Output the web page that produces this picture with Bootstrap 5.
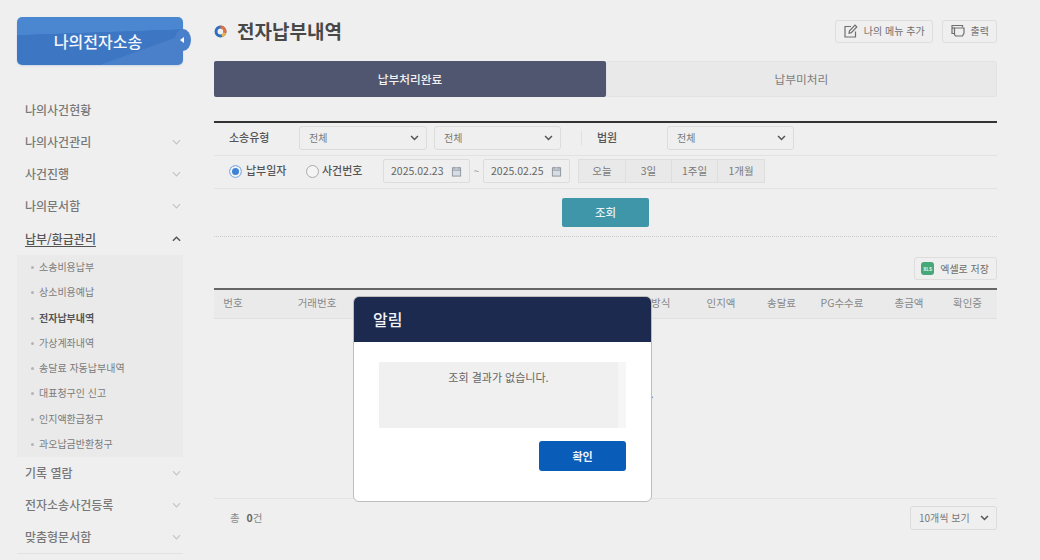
<!DOCTYPE html>
<html lang="ko">
<head>
<meta charset="utf-8">
<title>전자납부내역</title>
<link href="https://cdn.jsdelivr.net/npm/bootstrap@5.3.0/dist/css/bootstrap.min.css" rel="stylesheet">
<style>
html,body{height:560px;overflow:hidden}
body{background:#efefef;font-family:"Noto Sans CJK KR","Noto Sans",sans-serif;font-size:11px;color:#666;position:relative;line-height:1.4}
.shell{width:1040px;height:560px}
.side{width:166px;margin-left:17px;flex:none}
.brand{height:48px;margin-top:17px;border-radius:5px;color:#f4f7fc;font-size:16px;font-weight:500;position:relative;margin-bottom:29px;padding-right:4px;
 background:linear-gradient(160deg,transparent 0 72%,#4a7fc9 72.5%),linear-gradient(178deg,#4a87d0 0 33%,#3d77c4 34%);box-shadow:0 1px 2px rgba(60,110,190,.2)}
.brand-tab{position:absolute;right:-8px;top:12px;width:16px;height:22px;border-radius:50%;background:#4a7fc9;display:flex;align-items:center;justify-content:center}
.brand-tab svg{width:4px;height:6px;margin-left:-3px}
.menu-item{display:flex;align-items:center;justify-content:space-between;height:32px;padding:0 2px 0 8px;background:transparent;border:0;border-top:1px solid #e2e2e2;border-radius:0!important;font-size:12px;color:#787878;font-weight:500;margin:0!important}
.menu-item svg{width:9px;height:6px}
.menu-open{color:#555;height:33px;padding-top:1px}
.menu-open span{text-decoration:underline;text-underline-offset:2px}
.sub-list{background:#eaeaea;padding:0;height:202px;display:flex;flex-direction:column;justify-content:space-around;list-style:none;margin:0;font-size:10px;color:#7b7b7b}
.sub-list li{padding-left:22px;height:25px;line-height:24px;position:relative;margin-top:0}
.sub-list li::before{content:"";position:absolute;left:14px;top:11px;width:3px;height:3px;border-radius:50%;background:#b5b5b5}
.sub-list .on{font-weight:700;color:#555}
.side-end{border-top:1px solid #e2e2e2}
.body-col{width:783px;margin-left:31px;flex:none}
.head-row{height:28px;margin-top:17px;margin-bottom:16px}
.page-title{font-size:19px;font-weight:700;color:#484848;margin:0;line-height:28px}
.ring{width:13px;height:13px;margin-right:10px}
.tool-btn{height:23px;padding:0 7px 0 8px;font-size:10px;color:#6e6e6e;background:#efefef;border:1px solid #ddd;border-radius:3px;display:inline-flex;align-items:center;gap:6px;line-height:1}
.tool-btn svg{width:14px;height:14px}
.tool-gap{gap:9px}
.xl-btn{padding-left:6px}
.tab-row{height:36px;margin-bottom:24px}
.tab-cell{flex:1 1 0;display:flex;align-items:center;justify-content:center;font-size:11.7px;font-weight:500;border-radius:2px}
.tab-on{flex:0 0 392px;background:#50566f;color:#f1f1f1}
.tab-off{background:#e9e9e9;border:1px solid #e3e3e3;color:#7d7d7d;font-weight:400}
.filter{border-top:2px solid #333}
.filter-row{height:33px;border-bottom:1px solid #e2e2e2;padding:0 0 2px 15px;font-size:11px}
.lab{font-weight:500;color:#555}
.w-lab{width:70px}
.w-court{width:70px}
.w-r1{width:60px}
.w-r2{width:61px}
.sel{height:24px;width:128px;padding:0 20px 0 9px;font-size:10px;color:#777;background-color:#efefef;border:1px solid #dcdcdc;border-radius:3px;box-shadow:none;flex:none;line-height:22px;
 background-image:url("data:image/svg+xml,%3csvg xmlns='http://www.w3.org/2000/svg' viewBox='0 0 10 7'%3e%3cpath fill='none' stroke='%23555' stroke-width='1.8' d='M1 1.2l4 4 4-4'/%3e%3c/svg%3e");background-size:9px 6px;background-position:right 7px center}
.sel-b{width:127px;margin-left:7px}
.sel-c{width:127px}
.vr-mini{width:1px;height:14px;background:#e0e0e0;margin:0 15px 0 20px}
.radio-on,.radio-off{width:13px;height:13px;border-radius:50%;flex:none;margin-right:4px;background:#f4f4f4;border:1px solid #aaa}
.radio-on{background:#3f83d6;border:1px solid #8fb8e8;box-shadow:inset 0 0 0 2px #f4f4f4}
.radio-off{margin-right:3px}
.date-box{width:87px;height:24px;border:1px solid #dcdcdc;border-radius:2px;padding:0 7px 0 7px;font-size:10.5px;color:#666;display:flex;align-items:center;justify-content:space-between}
.date-box svg{width:11px;height:11px}
.til{width:13px;text-align:center;color:#999;font-size:10px}
.range-group{margin-left:8px}
.range-group .btn{height:24px;padding:0;font-size:10.5px;color:#7a7a7a;background:#e9e9e9;border:1px solid #dedede;line-height:22px;border-radius:0}
.range-group .btn:first-child{width:48px}.range-group .btn:nth-child(2){width:47px}.range-group .btn:nth-child(3){width:47px}.range-group .btn:nth-child(4){width:48px}
.search-wrap{height:48px;border-bottom:1px dotted #ccc;padding-top:9px}
.go-btn{width:87px;height:29px;padding:0;background:#3f96a8;border:0;color:#e8f1f3;font-size:11.5px;font-weight:500;border-radius:2px;line-height:29px}
.excel-row{height:51px;padding-top:20px}
.xl{width:13px;height:13px;border-radius:3px;background:#45a878;color:#e4f4ec;font-size:5px;font-weight:700;display:flex;align-items:center;justify-content:center;line-height:1}
.grid-wrap{border-top:2px solid #666}
.grid{margin:0;table-layout:fixed;width:783px;--bs-table-bg:transparent;font-size:10.5px;color:#888}
.grid th{height:28px;padding:0;background:#eaeaea;font-weight:400;color:#888;text-align:center;vertical-align:middle;border-bottom:1px solid #e0e0e0}
.grid th:nth-child(9){padding-left:7px}
.grid td{height:180px;padding:67px 4px 0 0;text-align:center;vertical-align:top;border-bottom:1px solid #e4e4e4;color:#666;font-size:11px}
.foot-row{height:33px;padding:7px 0 0 16px;color:#888;font-size:10.5px}
.foot-row b{color:#666;margin-left:4px}
.foot-count{margin-top:5px}
.pager{width:87px;padding-left:8px}
.c1{width:38px}.c2{width:130px}.c3{width:115px}.c4{width:115px}.c5{width:78px}.c6{width:62px}.c7{width:59px}.c8{width:62px}.c9{width:65px}.c10{width:59px}
.alert-box{position:absolute;left:353px;top:296px;width:299px;height:206px;background:#fff;border:1px solid #bdbdbd;border-radius:6px;overflow:hidden}
.alert-head{height:45px;background:#1c2a4f;color:#f4f4f4;font-size:16px;font-weight:500;padding-left:19px;line-height:45px}
.alert-body{padding:20px 25px 0}
.msg-box{height:66px;background:#f0f0f0;display:flex;font-size:11px;color:#666}
.msg-text{flex:1;text-align:center;padding-top:7px;line-height:16px}
.msg-track{width:8px;background:#f6f6f6}
.ok-btn{width:87px;height:30px;margin-top:13px;padding:0;background:#0a5cb9;border:0;color:#eef4fb;font-size:11px;font-weight:700;border-radius:3px;line-height:30px}
</style>
</head>
<body>
<div class="shell d-flex">
  <aside class="side">
    <div class="brand d-flex align-items-center justify-content-center">나의전자소송
      <span class="brand-tab"><svg viewBox="0 0 4 6"><path d="M4 0 0 3l4 3z" fill="#fff"/></svg></span>
    </div>
    <div class="list-group list-group-flush">
      <a class="list-group-item menu-item"><span>나의사건현황</span></a>
      <a class="list-group-item menu-item"><span>나의사건관리</span><svg viewBox="0 0 10 6"><path d="M1 1l4 4 4-4" fill="none" stroke="#c4c4c4" stroke-width="1.3"/></svg></a>
      <a class="list-group-item menu-item"><span>사건진행</span><svg viewBox="0 0 10 6"><path d="M1 1l4 4 4-4" fill="none" stroke="#c4c4c4" stroke-width="1.3"/></svg></a>
      <a class="list-group-item menu-item"><span>나의문서함</span><svg viewBox="0 0 10 6"><path d="M1 1l4 4 4-4" fill="none" stroke="#c4c4c4" stroke-width="1.3"/></svg></a>
      <a class="list-group-item menu-item menu-open"><span>납부/환급관리</span><svg viewBox="0 0 10 6"><path d="M1 5l4-4 4 4" fill="none" stroke="#555" stroke-width="1.6"/></svg></a>
      <ul class="sub-list">
        <li>소송비용납부</li>
        <li>상소비용예납</li>
        <li class="on">전자납부내역</li>
        <li>가상계좌내역</li>
        <li>송달료 자동납부내역</li>
        <li>대표청구인 신고</li>
        <li>인지액환급청구</li>
        <li>과오납금반환청구</li>
      </ul>
      <a class="list-group-item menu-item"><span>기록 열람</span><svg viewBox="0 0 10 6"><path d="M1 1l4 4 4-4" fill="none" stroke="#c4c4c4" stroke-width="1.3"/></svg></a>
      <a class="list-group-item menu-item"><span>전자소송사건등록</span><svg viewBox="0 0 10 6"><path d="M1 1l4 4 4-4" fill="none" stroke="#c4c4c4" stroke-width="1.3"/></svg></a>
      <a class="list-group-item menu-item"><span>맞춤형문서함</span><svg viewBox="0 0 10 6"><path d="M1 1l4 4 4-4" fill="none" stroke="#c4c4c4" stroke-width="1.3"/></svg></a>
      <div class="side-end"></div>
    </div>
  </aside>
  <main class="body-col">
    <div class="head-row d-flex align-items-center">
      <svg class="ring" viewBox="0 0 14 14"><circle cx="7" cy="7" r="4.8" fill="none" stroke="#2f6fc0" stroke-width="3.2"/><path d="M7 2.2A4.800 4.800 0 0 1 11.6 8.500" fill="none" stroke="#e2703f" stroke-width="3.200"/><path d="M11.6 8.500A4.800 4.800 0 0 1 8.500 11.600" fill="none" stroke="#e9b64a" stroke-width="3.200"/></svg>
      <h1 class="page-title">전자납부내역</h1>
      <div class="ms-auto d-flex tool-gap">
        <button class="tool-btn"><svg viewBox="0 0 14 14" fill="none" stroke="#6f6f6f" stroke-width="1.2"><path d="M11.500 7.500V13H1V2.500H7"/><path d="M5 9.300l.5-2.500L11 1.200l1.800 1.800L7.300 8.700z"/></svg>나의 메뉴 추가</button>
        <button class="tool-btn"><svg viewBox="0 0 14 14" fill="none" stroke="#6f6f6f" stroke-width="1.2"><path d="M3 9.500H1V1.500h10.500v1.800"/><path d="M3.500 4h9.500v5l-1.500 3H4.500l-1-1.500z"/><path d="M1 4h2.500"/></svg>출력</button>
      </div>
    </div>
    <div class="tab-row d-flex">
      <div class="tab-cell tab-on">납부처리완료</div>
      <div class="tab-cell tab-off">납부미처리</div>
    </div>
    <div class="filter">
      <div class="filter-row d-flex align-items-center">
        <span class="lab w-lab">소송유형</span>
        <select class="form-select sel"><option>전체</option></select>
        <select class="form-select sel sel-b"><option>전체</option></select>
        <span class="vr-mini"></span>
        <span class="lab w-court">법원</span>
        <select class="form-select sel sel-c"><option>전체</option></select>
      </div>
      <div class="filter-row d-flex align-items-center">
        <span class="radio-on"></span><span class="lab w-r1">납부일자</span>
        <span class="radio-off"></span><span class="lab w-r2">사건번호</span>
        <span class="date-box">2025.02.23<svg viewBox="0 0 12 12" fill="#d8dde2" stroke="#8a929c" stroke-width="1"><rect x="1.5" y="2" width="9" height="9"/><path d="M1.500 4.500h9M3.500 1v2M8.500 1v2" fill="none"/></svg></span>
        <span class="til">~</span>
        <span class="date-box">2025.02.25<svg viewBox="0 0 12 12" fill="#d8dde2" stroke="#8a929c" stroke-width="1"><rect x="1.5" y="2" width="9" height="9"/><path d="M1.500 4.500h9M3.500 1v2M8.500 1v2" fill="none"/></svg></span>
        <div class="btn-group range-group"><button class="btn">오늘</button><button class="btn">3일</button><button class="btn">1주일</button><button class="btn">1개월</button></div>
      </div>
      <div class="search-wrap text-center"><button class="btn go-btn">조회</button></div>
    </div>
    <div class="excel-row d-flex justify-content-end"><button class="tool-btn xl-btn"><span class="xl">XLS</span>엑셀로 저장</button></div>
    <div class="grid-wrap">
      <table class="table grid">
        <colgroup><col class="c1"><col class="c2"><col class="c3"><col class="c4"><col class="c5"><col class="c6"><col class="c7"><col class="c8"><col class="c9"><col class="c10"></colgroup>
        <thead><tr><th>번호</th><th>거래번호</th><th>사건번호</th><th>납부일자</th><th>납부방식</th><th>인지액</th><th>송달료</th><th>PG수수료</th><th>총금액</th><th>확인증</th></tr></thead>
        <tbody><tr><td colspan="10">조회 결과가 없습니다.</td></tr></tbody>
      </table>
    </div>
    <div class="foot-row d-flex align-items-start">
      <span class="foot-count">총 <b>0</b>건</span>
      <select class="form-select sel pager ms-auto"><option>10개씩 보기</option></select>
    </div>
  </main>
</div>
<div class="alert-box">
  <div class="alert-head">알림</div>
  <div class="alert-body">
    <div class="msg-box"><div class="msg-text">조회 결과가 없습니다.</div><div class="msg-track"></div></div>
    <div class="text-end"><button class="btn ok-btn">확인</button></div>
  </div>
</div>
<script src="https://cdn.jsdelivr.net/npm/bootstrap@5.3.0/dist/js/bootstrap.bundle.min.js"></script>
</body>
</html>
